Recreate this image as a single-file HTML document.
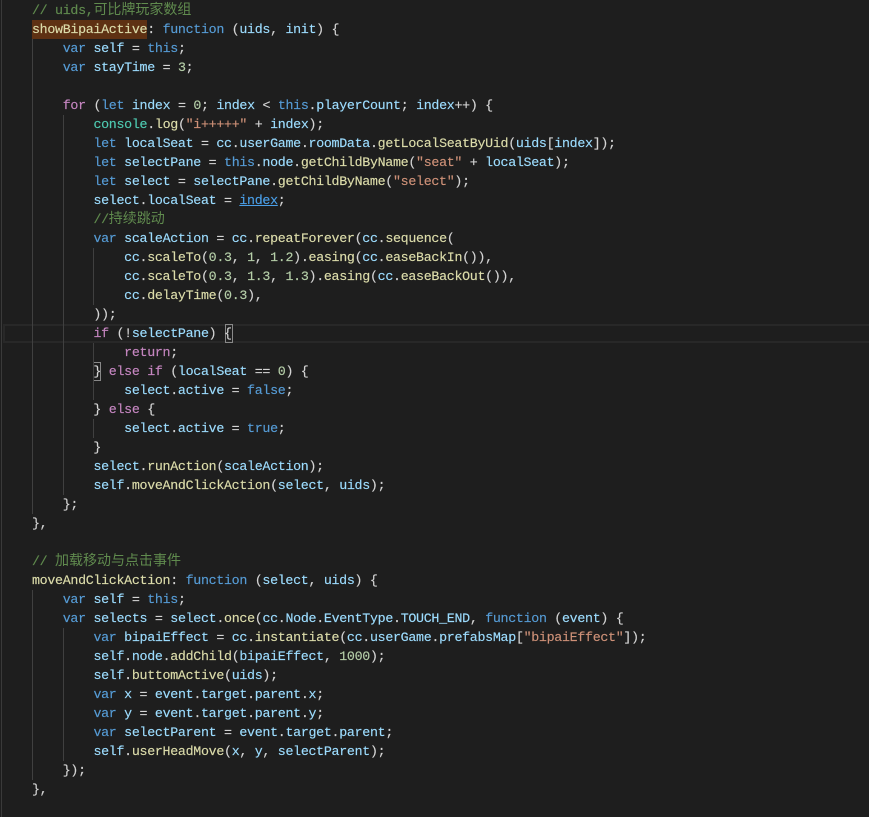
<!DOCTYPE html>
<html><head><meta charset="utf-8"><style>
html,body{margin:0;padding:0;background:#1e1e1e;width:869px;height:817px;overflow:hidden}
#c{position:absolute;left:32px;top:1px;margin:0;font:13.3px/19px "Liberation Mono","Noto Sans CJK SC",monospace;letter-spacing:-.3px;color:#d4d4d4;white-space:pre;-webkit-text-stroke:.15px}
.g{position:absolute;width:1px;background:#404040}
.k{color:#569cd6}.p{color:#c586c0}.v{color:#9cdcfe}.f{color:#dcdcaa}.s{color:#ce9178}.n{color:#b5cea8}.c{color:#608b4e}.t{color:#4ec9b0}
.u{color:#4a9fe8;text-decoration:underline}
.h{font-size:14px;letter-spacing:0;line-height:1;-webkit-text-stroke:0}
</style></head><body>
<div style="position:absolute;left:1px;top:0;width:1px;height:817px;background:#3a3a3a"></div>
<div style="position:absolute;left:3px;top:324px;width:866px;height:15px;border:2px solid #282828;border-right:0"></div>
<div style="position:absolute;left:32px;top:20px;width:115px;height:19px;background:#5e3113"></div>
<div style="position:absolute;left:225px;top:324px;width:6px;height:17px;border:1px solid #888"></div>
<div style="position:absolute;left:93px;top:362px;width:6px;height:17px;border:1px solid #888"></div>
<div class="g" style="left:32px;top:39px;height:475px"></div>
<div class="g" style="left:63px;top:115px;height:380px"></div>
<div class="g" style="left:93px;top:248px;height:57px"></div>
<div class="g" style="left:93px;top:343px;height:57px"></div>
<div class="g" style="left:93px;top:419px;height:19px"></div>
<div class="g" style="left:32px;top:590px;height:190px"></div>
<div class="g" style="left:63px;top:628px;height:133px"></div>
<pre id="c"><span class="c">// uids,<span class="h">可比牌玩家数组</span></span>
<span class="f">showBipaiActive</span>: <span class="k">function</span> (<span class="v">uids</span>, <span class="v">init</span>) {
    <span class="k">var</span> <span class="v">self</span> = <span class="k">this</span>;
    <span class="k">var</span> <span class="v">stayTime</span> = <span class="n">3</span>;

    <span class="p">for</span> (<span class="k">let</span> <span class="v">index</span> = <span class="n">0</span>; <span class="v">index</span> &lt; <span class="k">this</span>.<span class="v">playerCount</span>; <span class="v">index</span>++) {
        <span class="t">console</span>.<span class="f">log</span>(<span class="s">"i+++++"</span> + <span class="v">index</span>);
        <span class="k">let</span> <span class="v">localSeat</span> = <span class="v">cc</span>.<span class="v">userGame</span>.<span class="v">roomData</span>.<span class="f">getLocalSeatByUid</span>(<span class="v">uids</span>[<span class="v">index</span>]);
        <span class="k">let</span> <span class="v">selectPane</span> = <span class="k">this</span>.<span class="v">node</span>.<span class="f">getChildByName</span>(<span class="s">"seat"</span> + <span class="v">localSeat</span>);
        <span class="k">let</span> <span class="v">select</span> = <span class="v">selectPane</span>.<span class="f">getChildByName</span>(<span class="s">"select"</span>);
        <span class="v">select</span>.<span class="v">localSeat</span> = <span class="u">index</span>;
        <span class="c">//<span class="h">持续跳动</span></span>
        <span class="k">var</span> <span class="v">scaleAction</span> = <span class="v">cc</span>.<span class="f">repeatForever</span>(<span class="v">cc</span>.<span class="f">sequence</span>(
            <span class="v">cc</span>.<span class="f">scaleTo</span>(<span class="n">0.3</span>, <span class="n">1</span>, <span class="n">1.2</span>).<span class="f">easing</span>(<span class="v">cc</span>.<span class="f">easeBackIn</span>()),
            <span class="v">cc</span>.<span class="f">scaleTo</span>(<span class="n">0.3</span>, <span class="n">1.3</span>, <span class="n">1.3</span>).<span class="f">easing</span>(<span class="v">cc</span>.<span class="f">easeBackOut</span>()),
            <span class="v">cc</span>.<span class="f">delayTime</span>(<span class="n">0.3</span>),
        ));
        <span class="p">if</span> (!<span class="v">selectPane</span>) {
            <span class="p">return</span>;
        } <span class="p">else</span> <span class="p">if</span> (<span class="v">localSeat</span> == <span class="n">0</span>) {
            <span class="v">select</span>.<span class="v">active</span> = <span class="k">false</span>;
        } <span class="p">else</span> {
            <span class="v">select</span>.<span class="v">active</span> = <span class="k">true</span>;
        }
        <span class="v">select</span>.<span class="f">runAction</span>(<span class="v">scaleAction</span>);
        <span class="v">self</span>.<span class="f">moveAndClickAction</span>(<span class="v">select</span>, <span class="v">uids</span>);
    };
},

<span class="c">// <span class="h">加载移动与点击事件</span></span>
<span class="f">moveAndClickAction</span>: <span class="k">function</span> (<span class="v">select</span>, <span class="v">uids</span>) {
    <span class="k">var</span> <span class="v">self</span> = <span class="k">this</span>;
    <span class="k">var</span> <span class="v">selects</span> = <span class="v">select</span>.<span class="f">once</span>(<span class="v">cc</span>.<span class="v">Node</span>.<span class="v">EventType</span>.<span class="v">TOUCH_END</span>, <span class="k">function</span> (<span class="v">event</span>) {
        <span class="k">var</span> <span class="v">bipaiEffect</span> = <span class="v">cc</span>.<span class="f">instantiate</span>(<span class="v">cc</span>.<span class="v">userGame</span>.<span class="v">prefabsMap</span>[<span class="s">"bipaiEffect"</span>]);
        <span class="v">self</span>.<span class="v">node</span>.<span class="f">addChild</span>(<span class="v">bipaiEffect</span>, <span class="n">1000</span>);
        <span class="v">self</span>.<span class="f">buttomActive</span>(<span class="v">uids</span>);
        <span class="k">var</span> <span class="v">x</span> = <span class="v">event</span>.<span class="v">target</span>.<span class="v">parent</span>.<span class="v">x</span>;
        <span class="k">var</span> <span class="v">y</span> = <span class="v">event</span>.<span class="v">target</span>.<span class="v">parent</span>.<span class="v">y</span>;
        <span class="k">var</span> <span class="v">selectParent</span> = <span class="v">event</span>.<span class="v">target</span>.<span class="v">parent</span>;
        <span class="v">self</span>.<span class="f">userHeadMove</span>(<span class="v">x</span>, <span class="v">y</span>, <span class="v">selectParent</span>);
    });
},</pre>
</body></html>
